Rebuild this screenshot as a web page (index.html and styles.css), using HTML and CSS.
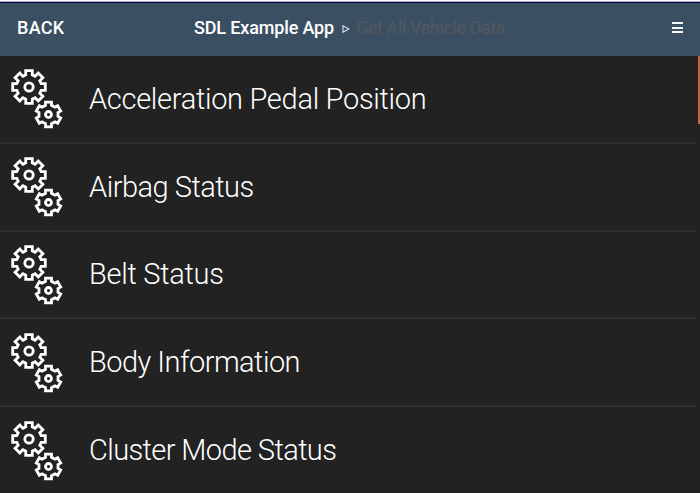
FILE: index.html
```html
<!DOCTYPE html>
<html lang="en">
<head>
<meta charset="utf-8">
<title>Get All Vehicle Data</title>
<link rel="stylesheet" href="styles.css">
</head>
<body>
<svg class="defs" aria-hidden="true">
  <symbol id="gears" viewBox="0 0 54 62">
    <g fill="none" stroke="#fff" stroke-width="2.8" stroke-linejoin="miter">
      <g transform="translate(19 19)">
        <path d="M-3.3-12.2V-16.3H3.3V-12.2L6.15-10.8L9.2-13.9L13.9-9.2L10.8-6.15L12.2-3.3H16.3V3.3H12.2L10.8 6.15L13.9 9.2L9.2 13.9L6.15 10.8L3.3 12.2V16.3H-3.3V12.2L-6.15 10.8L-9.2 13.9L-13.9 9.2L-10.8 6.15L-12.2 3.3H-16.3V-3.3H-12.2L-10.8-6.15L-13.9-9.2L-9.2-13.9L-6.15-10.8Z"/>
        <circle r="4.2"/>
      </g>
      <g transform="translate(38.5 46.5)">
        <path d="M-3-9.2V-12.3H3V-9.2L6.5-7.3L9.15-8.75L12.15-3.55L9.5-2.05V2.05L12.15 3.55L9.15 8.75L6.5 7.3L3 9.2V12.3H-3V9.2L-6.5 7.3L-9.15 8.75L-12.15 3.55L-9.5 2.05V-2.05L-12.15-3.55L-9.15-8.75L-6.5-7.3Z"/>
        <circle r="3"/>
      </g>
    </g>
  </symbol>
</svg>
<div class="screen">
  <header class="header">
    <a class="back">BACK</a>
    <div class="crumbs">
      <span class="app-name">SDL Example App</span>
      <svg class="arrow" viewBox="0 0 8 8"><path d="M1 .8V7.2L6.8 4Z"/></svg>
      <span class="page-name">Get All Vehicle Data</span>
    </div>
    <div class="menu"><i></i><i></i><i></i></div>
  </header>
  <main class="content">
    <ul class="list">
      <li><svg class="icon"><use href="#gears"/></svg><span class="t1">Acceleration Pedal Position</span></li>
      <li><svg class="icon"><use href="#gears"/></svg><span class="t2">Airbag Status</span></li>
      <li><svg class="icon"><use href="#gears"/></svg><span class="t3">Belt Status</span></li>
      <li><svg class="icon"><use href="#gears"/></svg><span class="t4">Body Information</span></li>
      <li><svg class="icon"><use href="#gears"/></svg><span class="t5">Cluster Mode Status</span></li>
    </ul>
    <div class="scrollbar"></div>
  </main>
</div>
</body>
</html>
```
FILE: styles.css
```css
* { box-sizing: border-box; }
body { margin: 0; background: #222; font-family: Roboto, "Liberation Sans", sans-serif; color: #fff; }
.defs { position: absolute; width: 0; height: 0; }
.screen { height: 493px; overflow: hidden; display: flex; flex-direction: column; border-top: 1px solid #fff; }
.header { height: 55px; flex: none; display: grid; grid-template-columns: 194px 1fr 28px; align-items: center; background: #3b4f62; border-top: 1px solid #b4b8c4; box-shadow: inset 0 1px #00004a; white-space: nowrap; }
.back { padding: 0 0 3px 17px; font-size: 18px; font-weight: 500; letter-spacing: .3px; }
.crumbs { display: flex; align-items: center; font-size: 18px; }
.app-name { width: 148px; padding-bottom: 3px; font-weight: 500; letter-spacing: -.15px; }
.arrow { width: 8px; height: 8px; margin-right: 6px; fill: none; stroke: #dde1e5; stroke-width: 1.1; }
.page-name { padding-bottom: 3px; color: #53585e; letter-spacing: -.4px; }
.menu { display: grid; gap: 2.5px; width: 11px; margin-top: -3px; }
.menu i { height: 2px; background: #f4f6f8; }
.content { flex: 1; display: flex; justify-content: space-between; min-height: 0; }
.list { width: 696px; margin: 0; padding: 0; list-style: none; }
.list li { height: 87.8px; display: flex; align-items: center; border-bottom: 2px solid #2f2f2f; padding-left: 10px; font-size: 29px; font-weight: 300; white-space: nowrap; }
.icon { width: 54px; height: 62px; margin: 1px 25px 0 0; }
.t1 { letter-spacing: -.3px; }
.t2 { letter-spacing: -.5px; }
.t3 { letter-spacing: -.28px; }
.t4 { letter-spacing: -.54px; }
.t5 { letter-spacing: -.6px; }
.scrollbar { width: 2px; height: 68px; background: #c8683f; }
```
